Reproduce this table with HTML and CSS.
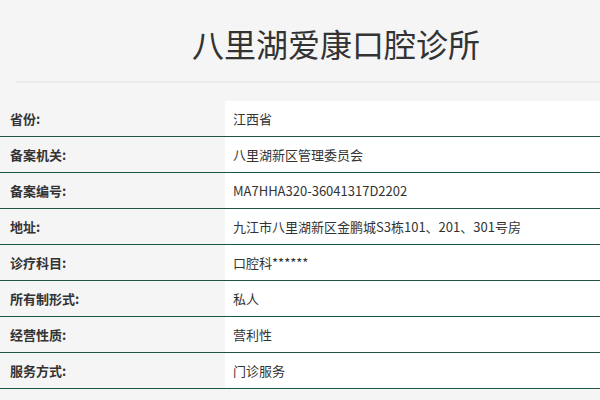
FILE: index.html
```html
<!DOCTYPE html>
<html lang="zh">
<head>
<meta charset="utf-8">
<link rel="stylesheet" href="styles.css">
</head>
<body>
<header class="head">
  <h1 class="title">八里湖爱康口腔诊所</h1>
</header>
<hr class="sep">
<div class="info">
  <div class="row"><div class="label">省份:</div><div class="value">江西省</div></div>
  <div class="row"><div class="label">备案机关:</div><div class="value">八里湖新区管理委员会</div></div>
  <div class="row"><div class="label">备案编号:</div><div class="value">MA7HHA320-36041317D2202</div></div>
  <div class="row"><div class="label">地址:</div><div class="value">九江市八里湖新区金鹏城S3栋101、201、301号房</div></div>
  <div class="row"><div class="label">诊疗科目:</div><div class="value">口腔科******</div></div>
  <div class="row"><div class="label">所有制形式:</div><div class="value">私人</div></div>
  <div class="row"><div class="label">经营性质:</div><div class="value">营利性</div></div>
  <div class="row"><div class="label">服务方式:</div><div class="value">门诊服务</div></div>
</div>
</body>
</html>
```
FILE: styles.css
```css
html, body {
  margin: 0;
  padding: 0;
  background: #f5f5f5;
  font-family: "Microsoft YaHei", "Noto Sans CJK SC", "Noto Sans", sans-serif;
  color: #333;
}
.head {
  height: 81px;
  display: flex;
  align-items: center;
  justify-content: center;
  padding-left: 72px;
  padding-top: 0;
  box-sizing: border-box;
}
.title {
  margin: 0;
  font-size: 32px;
  font-weight: normal;
  line-height: 1;
  color: #333;
  padding-top: 4px;
}
.sep {
  margin: 0 0 0 16px;
  border: 0;
  height: 2px;
  background: #ececec;
}
.info {
  margin-top: 18px;
}
.row {
  display: grid;
  grid-template-columns: 225px 1fr;
  height: 36px;
  box-sizing: border-box;
  border-bottom: 1px solid #1f5540;
}
.label {
  background: #f5f5f5;
  font-weight: bold;
  font-size: 13px;
  padding-left: 10px;
  display: flex;
  align-items: center;
  color: #333;
}
.value {
  background: #fff;
  font-size: 13px;
  padding-left: 8px;
  display: flex;
  align-items: center;
  color: #333;
}
```
